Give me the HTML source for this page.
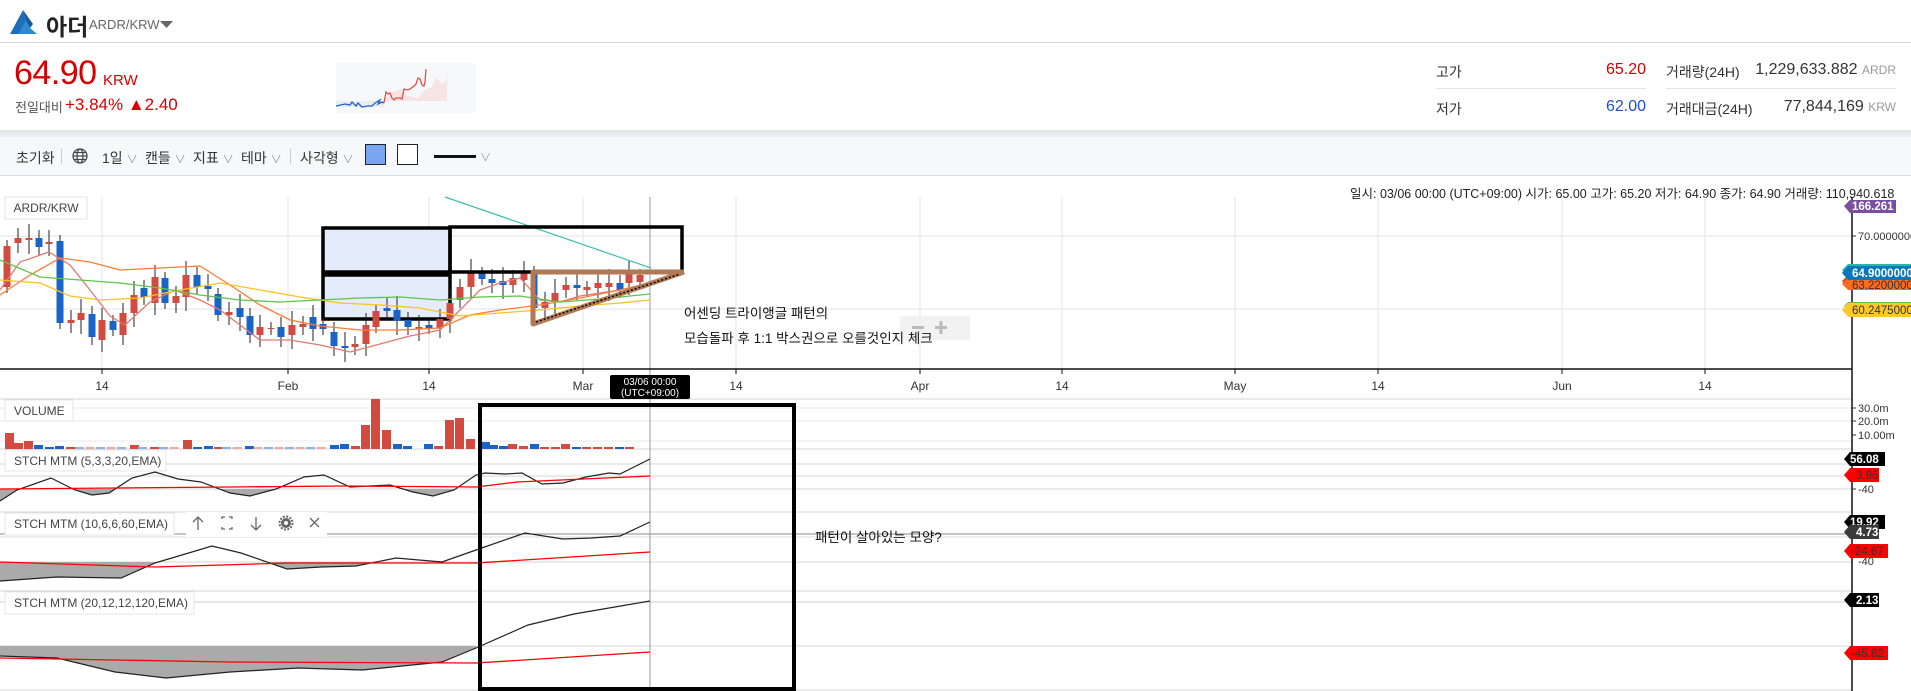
<!DOCTYPE html>
<html><head><meta charset="utf-8"><style>
*{margin:0;padding:0;box-sizing:border-box}
body{width:1911px;height:691px;overflow:hidden;background:#fff;font-family:"Liberation Sans","Noto Sans CJK KR",sans-serif;position:relative;color:#333}
.a{position:absolute;white-space:nowrap}
</style></head><body>
<!-- header -->
<svg class="a" style="left:10px;top:10px" width="27" height="24" viewBox="0 0 27 24"><polygon points="13,0 0,24 9,24 16,11" fill="#1c6fb8"/><polygon points="16,11 9,24 27,24 20,18" fill="#2c8ad0"/><polygon points="13,0 16,11 20,18 23,14" fill="#155a9a"/></svg>
<div class="a" style="left:46px;top:8px;font-size:23px;font-weight:bold;color:#222">아더</div>
<div class="a" style="left:89px;top:17px;font-size:13px;color:#666">ARDR/KRW</div>
<svg class="a" style="left:160px;top:21px" width="13" height="8"><polygon points="0,0 13,0 6.5,7" fill="#666"/></svg>
<div class="a" style="left:0;top:42px;width:1911px;height:1px;background:#d6d6d6"></div>
<div class="a" style="left:14px;top:54px;font-size:34px;color:#d60000;letter-spacing:-0.5px">64.90</div>
<div class="a" style="left:103px;top:72px;font-size:15px;color:#d60000">KRW</div>
<div class="a" style="left:15px;top:97px;font-size:13px;color:#555">전일대비</div>
<div class="a" style="left:65px;top:95px;font-size:17px;color:#d60000">+3.84% ▲2.40</div>
<svg class="a" style="left:336px;top:63px" width="140" height="50"><rect width="140" height="50" fill="#f7f8fa"/><rect x="0" y="38" width="48" height="6" fill="#e8ecf2"/><polygon points="48,37 56,29 66,26 72,33 82,35 90,26 96,24 100,15 106,21 110,18 111,5 111,38 48,38" fill="#f6e3e3"/><polyline fill="none" stroke="#1f63c6" stroke-width="1.3" points="0,43 9,41 14,42 16,39 20,43 22,40 26,44 32,43 36,43 39,40 44,37 42,41 46,39 48,40"/><polyline fill="none" stroke="#d9534f" stroke-width="1.3" points="48,40 50,29 52,31 54,30 56,35 58,37 60,35 62,35 64,35 66,36 68,26 71,27 74,26 78,23 80,21 82,15 84,16 86,22 88,23 89,19 90,6"/></svg>
<div class="a" style="left:1436px;top:62px;font-size:14px;color:#333">고가</div>
<div class="a" style="left:1560px;top:61px;width:86px;text-align:right;font-size:16px;color:#d60000">65.20</div>
<div class="a" style="left:1436px;top:88px;width:210px;height:1px;background:#e3e3e3"></div>
<div class="a" style="left:1436px;top:99px;font-size:14px;color:#333">저가</div>
<div class="a" style="left:1560px;top:98px;width:86px;text-align:right;font-size:16px;color:#1a4fd0">62.00</div>
<div class="a" style="left:1666px;top:62px;font-size:14px;color:#333">거래량(24H)</div>
<div class="a" style="left:1700px;top:61px;width:196px;text-align:right;font-size:16px;color:#333">1,229,633.882 <span style="font-size:12px;color:#999">ARDR</span></div>
<div class="a" style="left:1666px;top:88px;width:230px;height:1px;background:#e3e3e3"></div>
<div class="a" style="left:1666px;top:99px;font-size:14px;color:#333">거래대금(24H)</div>
<div class="a" style="left:1700px;top:98px;width:196px;text-align:right;font-size:16px;color:#333">77,844,169 <span style="font-size:12px;color:#999">KRW</span></div>
<div class="a" style="left:0;top:130px;width:1911px;height:7px;background:linear-gradient(#e2e4e8,#eef0f3)"></div>
<div class="a" style="left:0;top:137px;width:1911px;height:39px;background:#f7f8fa;border-bottom:1px solid #dcdcdc"></div>
<div class="a" style="left:16px;top:148px;font-size:14px;color:#333">초기화</div>
<div class="a" style="left:61px;top:149px;width:1px;height:15px;background:#ccc"></div>
<svg class="a" style="left:72px;top:148px" width="16" height="16" viewBox="0 0 16 16" fill="none" stroke="#444" stroke-width="1.2"><circle cx="8" cy="8" r="7"/><ellipse cx="8" cy="8" rx="3" ry="7"/><line x1="1" y1="8" x2="15" y2="8"/><line x1="2" y1="4.5" x2="14" y2="4.5"/><line x1="2" y1="11.5" x2="14" y2="11.5"/></svg>
<div class="a" style="left:102px;top:148px;font-size:14px;color:#333">1일 <span style="color:#999;font-size:11px">∨</span></div>
<div class="a" style="left:145px;top:148px;font-size:14px;color:#333">캔들 <span style="color:#999;font-size:11px">∨</span></div>
<div class="a" style="left:193px;top:148px;font-size:14px;color:#333">지표 <span style="color:#999;font-size:11px">∨</span></div>
<div class="a" style="left:241px;top:148px;font-size:14px;color:#333">테마 <span style="color:#999;font-size:11px">∨</span></div>
<div class="a" style="left:290px;top:149px;width:1px;height:15px;background:#ccc"></div>
<div class="a" style="left:300px;top:148px;font-size:14px;color:#333">사각형 <span style="color:#999;font-size:11px">∨</span></div>
<div class="a" style="left:365px;top:144px;width:21px;height:21px;background:#7ba5f2;border:1px solid #222"></div>
<div class="a" style="left:397px;top:144px;width:21px;height:21px;background:#fff;border:1px solid #222"></div>
<div class="a" style="left:434px;top:155px;width:42px;height:3px;background:#111"></div>
<div class="a" style="left:480px;top:149px;font-size:11px;color:#999">∨</div>
<div class="a" style="left:1350px;top:183px;font-size:12.5px;color:#222">일시: 03/06 00:00 (UTC+09:00) 시가: 65.00 고가: 65.20 저가: 64.90 종가: 64.90 거래량: 110,940.618</div>

<svg class="a" style="left:0;top:0" width="1911" height="691" font-family="Liberation Sans, Noto Sans CJK KR, sans-serif">
<g stroke="#e3e3e3" stroke-width="1">
<line x1="0" y1="236" x2="1852" y2="236"/><line x1="0" y1="309" x2="1852" y2="309"/>
<g><line x1="102" y1="197" x2="102" y2="369"/><line x1="288" y1="197" x2="288" y2="369"/><line x1="429" y1="197" x2="429" y2="369"/><line x1="583" y1="197" x2="583" y2="369"/><line x1="736" y1="197" x2="736" y2="369"/><line x1="920" y1="197" x2="920" y2="369"/><line x1="1062" y1="197" x2="1062" y2="369"/><line x1="1235" y1="197" x2="1235" y2="369"/><line x1="1378" y1="197" x2="1378" y2="369"/><line x1="1562" y1="197" x2="1562" y2="369"/><line x1="1705" y1="197" x2="1705" y2="369"/></g>
</g>
<g stroke="#d4d4d4">
<line x1="0" y1="399" x2="1852" y2="399"/><line x1="0" y1="408" x2="1852" y2="408" stroke="#e8e8e8"/><line x1="0" y1="421" x2="1852" y2="421" stroke="#e8e8e8"/><line x1="0" y1="441" x2="1852" y2="441" stroke="#e8e8e8"/>
<line x1="0" y1="449" x2="1852" y2="449"/><line x1="0" y1="464" x2="1852" y2="464"/><line x1="0" y1="476" x2="1852" y2="476"/><line x1="0" y1="489" x2="1852" y2="489"/><line x1="0" y1="512" x2="1852" y2="512"/>
<line x1="0" y1="534" x2="1852" y2="534" stroke="#888"/><line x1="0" y1="537" x2="1852" y2="537" stroke="#eee" stroke-width="2"/><line x1="0" y1="562" x2="1852" y2="562"/><line x1="0" y1="591" x2="1852" y2="591"/>
<line x1="0" y1="602" x2="1852" y2="602" stroke="#e6e6e6" stroke-width="2"/><line x1="0" y1="646" x2="1852" y2="646"/><line x1="0" y1="690" x2="1852" y2="690"/>
</g>
<line x1="650" y1="197" x2="650" y2="691" stroke="#999"/>
<line x1="0" y1="369" x2="1852" y2="369" stroke="#111" stroke-width="1.5"/>
<line x1="1852" y1="197" x2="1852" y2="691" stroke="#111" stroke-width="1.5"/>
<g stroke="#111"><line x1="102" y1="369" x2="102" y2="374"/><line x1="288" y1="369" x2="288" y2="374"/><line x1="429" y1="369" x2="429" y2="374"/><line x1="583" y1="369" x2="583" y2="374"/><line x1="736" y1="369" x2="736" y2="374"/><line x1="920" y1="369" x2="920" y2="374"/><line x1="1062" y1="369" x2="1062" y2="374"/><line x1="1235" y1="369" x2="1235" y2="374"/><line x1="1378" y1="369" x2="1378" y2="374"/><line x1="1562" y1="369" x2="1562" y2="374"/><line x1="1705" y1="369" x2="1705" y2="374"/></g>
<g font-size="12" fill="#333" text-anchor="middle"><text x="102" y="390">14</text><text x="288" y="390">Feb</text><text x="429" y="390">14</text><text x="583" y="390">Mar</text><text x="736" y="390">14</text><text x="920" y="390">Apr</text><text x="1062" y="390">14</text><text x="1235" y="390">May</text><text x="1378" y="390">14</text><text x="1562" y="390">Jun</text><text x="1705" y="390">14</text></g>

<rect x="323" y="228" width="127" height="44" fill="#e4ebfa" stroke="#000" stroke-width="3.5"/>
<rect x="323" y="275" width="127" height="44" fill="#e4ebfa" stroke="#000" stroke-width="3.5"/>
<line x1="445" y1="197" x2="651" y2="268" stroke="#3cc0b0" stroke-width="1.2"/>

<g id="c"></g>
<g fill="none" stroke-width="1.3">
<polyline stroke="#e07a70" points="0,290 20,262 49,252 70,265 90,290 110,316 125,325 150,302 175,290 200,300 220,310 240,325 260,340 290,340 320,345 350,352 380,344 410,336 440,330 460,310 480,290 500,283 520,278 540,300 560,302 580,296 600,293 620,290 650,283"/>
<polyline stroke="#ff7b33" points="0,295 30,275 60,258 90,262 120,270 160,268 200,266 230,285 260,305 290,320 320,326 360,330 400,330 440,328 470,315 500,310 540,305 580,298 620,290 650,283"/>
<polyline stroke="#ffc21a" points="0,280 40,283 70,296 100,300 140,298 180,290 220,283 260,290 300,297 340,303 380,305 420,308 460,316 500,313 540,310 580,306 620,303 650,300"/>
<polyline stroke="#5ec44a" points="0,260 40,277 80,280 120,283 160,288 200,295 240,300 280,302 320,300 360,298 400,297 440,300 480,297 520,296 560,302 600,299 650,294"/>
</g>
<rect x="450" y="227" width="232" height="45" fill="none" stroke="#000" stroke-width="3.5"/>
<g stroke="#b17a54" stroke-width="5" fill="none" stroke-linejoin="round"><polyline points="684,272 533,272 533,324 684,272"/></g>
<line x1="536" y1="322" x2="680" y2="274" stroke="#000" stroke-width="1.5" stroke-dasharray="2,2"/>
<rect x="5" y="197" width="82" height="22" fill="#fff" stroke="#e6e6e6"/><text x="46" y="212" font-size="12" fill="#444" text-anchor="middle">ARDR/KRW</text>

<rect x="900" y="316" width="70" height="24" fill="#f0f0f0" opacity="0.85"/><rect x="912" y="326" width="12" height="3" fill="#bbb"/><rect x="935" y="326" width="12" height="3" fill="#bbb"/><rect x="939.5" y="321" width="3" height="13" fill="#bbb"/>
<text x="684" y="318" font-size="13.5" fill="#111">어센딩 트라이앵글 패턴의</text>
<text x="684" y="343" font-size="13.5" fill="#111">모습돌파 후 1:1 박스권으로 오를것인지 체크</text>
<rect x="610" y="375" width="80" height="24" rx="2" fill="#000"/><text x="650" y="385" font-size="10" fill="#fff" text-anchor="middle">03/06 00:00</text><text x="650" y="396" font-size="10" fill="#fff" text-anchor="middle">(UTC+09:00)</text>

<g id="v"></g>
<rect x="5" y="400" width="68" height="21" fill="#fff" stroke="#e6e6e6"/><text x="14" y="415" font-size="12" fill="#444">VOLUME</text>

<clipPath id="k1"><rect x="0" y="489" width="1852" height="30"/></clipPath>
<polygon clip-path="url(#k1)" fill="#aaa" points="0,501 17,490 51,478 75,490 92,495 109,493 132,478 155,472 178,479 201,482 230,493 250,496 276,489 304,477 324,475 350,487 390,485 413,492 433,496 454,490 476,475 476,489 0,489"/>
<polyline fill="none" stroke="#222" stroke-width="1.2" points="0,501 17,490 51,478 75,490 92,495 109,493 132,478 155,472 178,479 201,482 230,493 250,496 276,489 304,477 324,475 350,487 390,485 413,492 433,496 454,490 476,475 485,473 505,474 522,473 542,484 563,483 586,477 609,473 620,474 650,459"/>
<polyline fill="none" stroke="#f00" stroke-width="1.3" points="0,489 115,488 230,487 344,486 476,487 517,482 650,476"/>
<rect x="5" y="450" width="161" height="21" fill="#fff" stroke="#e6e6e6"/><text x="14" y="465" font-size="12" fill="#444">STCH MTM (5,3,3,20,EMA)</text>
<clipPath id="k2"><rect x="0" y="562" width="1852" height="30"/></clipPath>
<polygon clip-path="url(#k2)" fill="#aaa" points="0,581 57,577 121,578 155,563 212,546 241,553 287,569 321,567 356,566 396,558 442,562 476,550 476,562 0,562"/>
<polyline fill="none" stroke="#222" stroke-width="1.2" points="0,581 57,577 121,578 155,563 212,546 241,553 287,569 321,567 356,566 396,558 442,562 476,550 525,533 563,539 591,538 620,536 650,522"/>
<polyline fill="none" stroke="#f00" stroke-width="1.3" points="0,562 155,567 287,563 476,563 650,552"/>
<rect x="5" y="513" width="169" height="22" fill="#fff" stroke="#e6e6e6"/><text x="14" y="528" font-size="12" fill="#444">STCH MTM (10,6,6,60,EMA)</text>
<rect x="186" y="512" width="141" height="25" fill="#fff"/>
<g stroke="#666" stroke-width="1.3" fill="none"><path d="M198 530V517M193 522l5-5 5 5"/><path d="M222 519v-2h3M229 517h3v2M232 527v2h-3M225 529h-3v-2"/><path d="M256 517v13M251 525l5 5 5-5"/><path d="M310 518l9 9M319 518l-9 9"/></g>
<circle cx="286" cy="523" r="5" fill="#666"/><circle cx="286" cy="523" r="6.5" fill="none" stroke="#666" stroke-width="2" stroke-dasharray="2,1.4"/><circle cx="286" cy="523" r="2" fill="#fff"/>
<polygon fill="#aaa" points="0,646 476,646 476,648 442,662 362,670 298,668 230,672 166,678 115,672 57,658 0,656"/>
<polyline fill="none" stroke="#222" stroke-width="1.2" points="0,656 57,658 115,672 166,678 230,672 298,668 362,670 442,662 476,648 528,625 574,614 650,601"/>
<polyline fill="none" stroke="#f00" stroke-width="1.3" points="0,658 230,662 476,663 650,652"/>
<rect x="5" y="592" width="189" height="22" fill="#fff" stroke="#e6e6e6"/><text x="14" y="607" font-size="12" fill="#444">STCH MTM (20,12,12,120,EMA)</text>

<rect x="480" y="405" width="314" height="284" fill="none" stroke="#000" stroke-width="4"/>
<text x="815" y="542" font-size="13.5" fill="#111">패턴이 살아있는 모양?</text>

<g font-size="11" fill="#333"><text x="1858" y="240">70.0000000</text><text x="1858" y="412">30.0m</text><text x="1858" y="425">20.0m</text><text x="1858" y="439">10.00m</text><text x="1858" y="493">-40</text><text x="1858" y="565">-40</text></g>
<g stroke="#333"><line x1="1852" y1="236" x2="1856" y2="236"/><line x1="1852" y1="408" x2="1856" y2="408"/><line x1="1852" y1="421" x2="1856" y2="421"/><line x1="1852" y1="435" x2="1856" y2="435"/><line x1="1852" y1="489" x2="1856" y2="489"/></g>
<g font-size="11.5" font-weight="bold">
<path d="M1844 206l6-6h46v13h-46z" fill="#7b4fa0"/><text x="1852" y="210" fill="#fff">166.261</text>
<path d="M1842 270l6-6h63v13h-63z" fill="#2cb5a8"/>
<path d="M1842 281l6-6h63v14h-63z" fill="#cc4a3a"/>
<path d="M1842 284l6-6h63v12h-63z" fill="#ff6b1e"/><text x="1852" y="289" fill="#333" font-weight="normal">63.2200000</text>
<path d="M1842 273l6-7h63v14h-63z" fill="#0a78c0"/><text x="1852" y="277" fill="#fff">64.9000000</text>
<path d="M1842 308l6-6h63v2h-63z" fill="#5ec44a"/><path d="M1842 310l6-7h63v14h-63z" fill="#ffc82a"/><text x="1852" y="314" fill="#333" font-weight="normal">60.2475000</text>
<path d="M1844 459l6-7h35v14h-35z" fill="#000"/><text x="1850" y="463" fill="#fff">56.08</text>
<path d="M1844 475l6-7h29v14h-29z" fill="#f00"/><text x="1856" y="479" fill="#333" font-weight="normal">3.96</text>
<path d="M1844 522l6-7h35v14h-35z" fill="#000"/><text x="1850" y="526" fill="#fff">19.92</text>
<path d="M1844 532l6-7h29v14h-29z" fill="#3a3a3a"/><text x="1856" y="536" fill="#fff">4.73</text>
<path d="M1844 551l6-7h38v14h-38z" fill="#f00"/><text x="1851" y="555" fill="#333" font-weight="normal">-24.67</text>
<path d="M1844 600l6-7h29v14h-29z" fill="#000"/><text x="1856" y="604" fill="#fff">2.13</text>
<path d="M1844 653l6-7h38v14h-38z" fill="#f00"/><text x="1851" y="657" fill="#333" font-weight="normal">-45.82</text>
</g>
</svg>
<script>
var R="#d24a40",B="#1a64c8";
var c=[[7,246,287,1],[18,238,243,1],[29,238,240,1],[39,238,247,0],[49,242,244,1],[60,241,323,0],[71,320,323,1],[81,313,320,1],[92,314,337,0],[102,320,340,1],[113,321,330,0],[123,313,335,1],[134,295,313,1],[144,288,297,0],[155,277,303,1],[165,278,303,0],[176,296,303,1],[186,275,297,1],[197,275,287,0],[208,286,289,0],[218,294,315,0],[229,312,315,1],[240,308,317,0],[250,316,335,0],[260,327,335,1],[271,328,329,1],[281,327,337,0],[292,325,335,1],[303,324,327,1],[313,317,329,0],[323,324,329,0],[334,332,346,0],[345,346,348,0],[355,344,347,1],[366,325,344,1],[376,311,327,1],[387,308,311,0],[397,310,321,0],[408,320,327,0],[419,327,329,1],[429,325,328,0],[440,319,328,1],[450,303,319,1],[460,287,300,1],[471,271,287,1],[482,273,279,0],[492,279,283,0],[503,281,285,0],[513,278,285,1],[524,273,280,1],[534,272,308,0],[545,302,308,1],[555,293,302,1],[566,285,290,1],[577,285,288,0],[587,287,290,1],[598,283,288,1],[609,283,287,1],[620,283,290,0],[629,273,283,1],[640,275,282,1]];
var s="";
c.forEach(function(d,i){var w=6+((i*7)%5)*2;s+='<line x1="'+d[0]+'" x2="'+d[0]+'" y1="'+(d[1]-w)+'" y2="'+(d[2]+w)+'" stroke="#222"/><rect x="'+(d[0]-3.5)+'" y="'+d[1]+'" width="7" height="'+Math.max(1,d[2]-d[1])+'" fill="'+(d[3]?R:B)+'"/>';});
document.getElementById("c").innerHTML=s;
var v=[[5,433,1],[14,443,1],[24,441,1],[34,445,0],[45,447,0],[55,446,0],[66,447,1],[130,445,1],[150,447,1],[183,440,1],[193,447,0],[204,446,0],[214,447,1],[245,446,0],[330,445,0],[340,444,0],[351,446,1],[361,425,1],[371,399,1],[382,430,1],[393,444,0],[403,446,0],[424,444,0],[434,446,1],[445,420,1],[455,418,1],[466,439,1],[481,442,0],[489,445,0],[499,446,0],[508,444,1],[519,446,1],[530,444,0],[540,447,1],[551,447,1],[561,444,1],[572,447,0],[582,447,1],[593,447,1],[604,447,1],[615,447,0],[625,447,1]];
var s2="";v.forEach(function(d){s2+='<rect x="'+d[0]+'" y="'+d[1]+'" width="9" height="'+(449-d[1])+'" fill="'+(d[2]?R:B)+'"/>';});
for(var x=75;x<330;x+=10.5){if(!v.some(function(d){return Math.abs(d[0]-x)<8}))s2+='<rect x="'+x+'" y="447" width="9" height="2" fill="'+((x|0)%3?"#f0a8a4":"#8fb2e8")+'"/>';}
document.getElementById("v").innerHTML=s2;
</script>
</body></html>
